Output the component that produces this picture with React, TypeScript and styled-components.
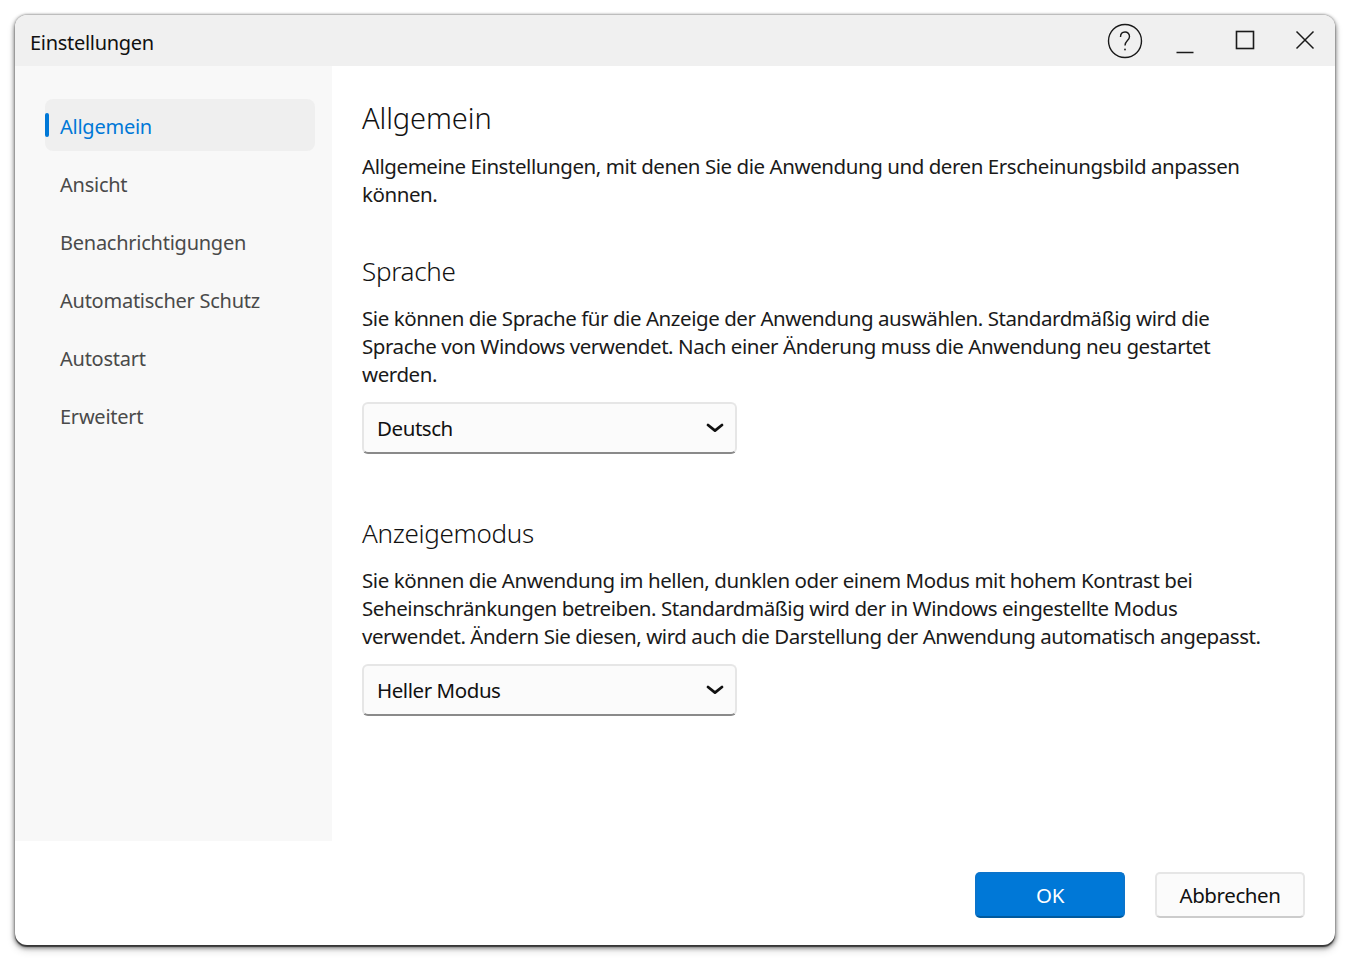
import React from "react";
import styled, { createGlobalStyle } from "styled-components";

const GlobalStyle = createGlobalStyle`
  html, body {
    margin: 0;
    padding: 0;
    background: #ffffff;
  }
  body {
    font-family: "Noto Sans", "Open Sans", "Liberation Sans", sans-serif;
  }
`;

const Page = styled.div`
  width: 1350px;
  height: 960px;
  padding: 15px;
  box-sizing: border-box;
  overflow: hidden;
`;

const Window = styled.div`
  width: 1320px;
  height: 930px;
  display: flex;
  flex-direction: column;
  background: #ffffff;
  border-radius: 12px;
  overflow: hidden;
  box-shadow: 0 2px 1px rgba(0, 0, 0, 0.6), 0 2px 4px 1px rgba(0, 0, 0, 0.45), 0 5px 8px rgba(0, 0, 0, 0.16), 0 -1px 2px rgba(0, 0, 0, 0.2);
`;

const TitleBar = styled.div`
  height: 51px;
  flex: none;
  display: flex;
  align-items: center;
  justify-content: space-between;
  padding: 0 0 0 15px;
  background: #f0f0f0;
`;

const Title = styled.div`
  font-size: 20px;
  letter-spacing: -0.3px;
  color: #111111;
  margin-top: 3px;
`;

const WindowControls = styled.div`
  display: flex;
  align-items: center;
`;

const ControlButton = styled.div`
  width: 60px;
  height: 51px;
  display: flex;
  align-items: center;
  justify-content: center;
`;

const Body = styled.div`
  flex: 1;
  display: flex;
  min-height: 0;
`;

const Sidebar = styled.nav`
  width: 317px;
  flex: none;
  box-sizing: border-box;
  padding: 33px 17px 0 30px;
  background: #f8f8f8;
  display: flex;
  flex-direction: column;
  gap: 6px;
`;

const NavItem = styled.div<{ $active?: boolean }>`
  position: relative;
  height: 52px;
  box-sizing: border-box;
  display: flex;
  align-items: center;
  padding: 2px 0 0 15px;
  border-radius: 8px;
  font-size: 20px;
  letter-spacing: -0.25px;
  color: ${(props) => (props.$active ? "#0078d7" : "#4a4a4a")};
  background: ${(props) => (props.$active ? "#efefef" : "transparent")};

  ${(props) =>
    props.$active &&
    `&::before {
      content: "";
      position: absolute;
      left: 0;
      top: 14px;
      width: 4px;
      height: 24px;
      border-radius: 2px;
      background: #0078d7;
    }`}
`;

const Content = styled.main`
  flex: 1;
  box-sizing: border-box;
  padding: 31px 60px 0 30px;
`;

const Heading = styled.h1`
  margin: 0 0 2px;
  font-size: 29px;
  font-weight: 300;
  line-height: 42px;
  letter-spacing: -0.1px;
  color: #111111;
`;

const SectionHeading = styled.h2`
  margin: 0;
  font-size: 26px;
  font-weight: 300;
  line-height: 40px;
  letter-spacing: -0.3px;
  color: #111111;
`;

const Text = styled.p`
  margin: 13px 0 0;
  font-size: 20.5px;
  line-height: 28px;
  letter-spacing: -0.44px;
  color: #1a1a1a;
`;

const Section = styled.section<{ $gap: number }>`
  margin-top: ${(props) => props.$gap}px;
`;

const Select = styled.div`
  width: 375px;
  height: 52px;
  box-sizing: border-box;
  margin-top: 14px;
  display: flex;
  align-items: center;
  justify-content: space-between;
  padding: 0 11px 0 13px;
  background: #fbfbfb;
  border: 2px solid #e6e6e6;
  border-bottom-color: #8a8a8a;
  border-radius: 6px;
  font-size: 20.5px;
  letter-spacing: -0.44px;
  color: #111111;
`;

const Footer = styled.footer`
  height: 104px;
  flex: none;
  box-sizing: border-box;
  display: flex;
  justify-content: flex-end;
  gap: 30px;
  padding: 31px 30px 0 0;
`;

const Button = styled.button<{ $primary?: boolean }>`
  width: 150px;
  height: 46px;
  box-sizing: border-box;
  padding: 0;
  border-radius: 5px;
  font-family: inherit;
  font-size: 20.5px;
  letter-spacing: -0.4px;
  color: ${(props) => (props.$primary ? "#ffffff" : "#111111")};
  background: ${(props) => (props.$primary ? "#0078d7" : "#fbfbfb")};
  border: 2px solid ${(props) => (props.$primary ? "#0a74cc" : "#e6e6e6")};
  border-bottom-color: ${(props) => (props.$primary ? "#005a9e" : "#cccccc")};
`;

const Chevron = () => (
  <svg width="18" height="10" viewBox="0 0 18 10" fill="none">
    <path d="M2 2 L9 7.6 L16 2" stroke="#111" strokeWidth="2.8" strokeLinecap="round" strokeLinejoin="round" />
  </svg>
);

const navItems = ["Allgemein", "Ansicht", "Benachrichtigungen", "Automatischer Schutz", "Autostart", "Erweitert"];

export default function App() {
  return (
    <Page>
      <GlobalStyle />
      <Window>
        <TitleBar>
          <Title>Einstellungen</Title>
          <WindowControls>
            <ControlButton>
              <svg width="36" height="36" viewBox="0 0 36 36" fill="none" stroke="#1a1a1a">
                <circle cx="18" cy="18" r="16.5" strokeWidth="1.4" />
                <path d="M13.5 14 C13.5 7.5 22.5 7.5 22.5 13.5 C22.5 17.5 18 17.5 18 22.5" strokeWidth="1.4" />
                <circle cx="18" cy="26.5" r="0.9" fill="#1a1a1a" stroke="none" />
              </svg>
            </ControlButton>
            <ControlButton>
              <svg width="18" height="36" viewBox="0 0 18 36" fill="none" stroke="#1a1a1a">
                <path d="M0.5 29.5 H17.5" strokeWidth="1.5" />
              </svg>
            </ControlButton>
            <ControlButton>
              <svg width="20" height="36" viewBox="0 0 20 36" fill="none" stroke="#1a1a1a">
                <rect x="1.5" y="8.5" width="17" height="17" strokeWidth="1.6" />
              </svg>
            </ControlButton>
            <ControlButton>
              <svg width="20" height="36" viewBox="0 0 20 36" fill="none" stroke="#1a1a1a">
                <path d="M1.5 8.5 L18.5 25.5 M18.5 8.5 L1.5 25.5" strokeWidth="1.5" />
              </svg>
            </ControlButton>
          </WindowControls>
        </TitleBar>
        <Body>
          <Sidebar>
            {navItems.map((item, index) => (
              <NavItem key={item} $active={index === 0}>
                {item}
              </NavItem>
            ))}
          </Sidebar>
          <Content>
            <Heading>Allgemein</Heading>
            <Text>Allgemeine Einstellungen, mit denen Sie die Anwendung und deren Erscheinungsbild anpassen können.</Text>
            <Section $gap={43}>
              <SectionHeading>Sprache</SectionHeading>
              <Text>
                Sie können die Sprache für die Anzeige der Anwendung auswählen. Standardmäßig wird die Sprache von
                Windows verwendet. Nach einer Änderung muss die Anwendung neu gestartet werden.
              </Text>
              <Select>
                Deutsch
                <Chevron />
              </Select>
            </Section>
            <Section $gap={59}>
              <SectionHeading>Anzeigemodus</SectionHeading>
              <Text>
                Sie können die Anwendung im hellen, dunklen oder einem Modus mit hohem Kontrast bei Seheinschränkungen
                betreiben. Standardmäßig wird der in Windows eingestellte Modus verwendet. Ändern Sie diesen, wird auch
                die Darstellung der Anwendung automatisch angepasst.
              </Text>
              <Select>
                Heller Modus
                <Chevron />
              </Select>
            </Section>
          </Content>
        </Body>
        <Footer>
          <Button $primary>OK</Button>
          <Button>Abbrechen</Button>
        </Footer>
      </Window>
    </Page>
  );
}
